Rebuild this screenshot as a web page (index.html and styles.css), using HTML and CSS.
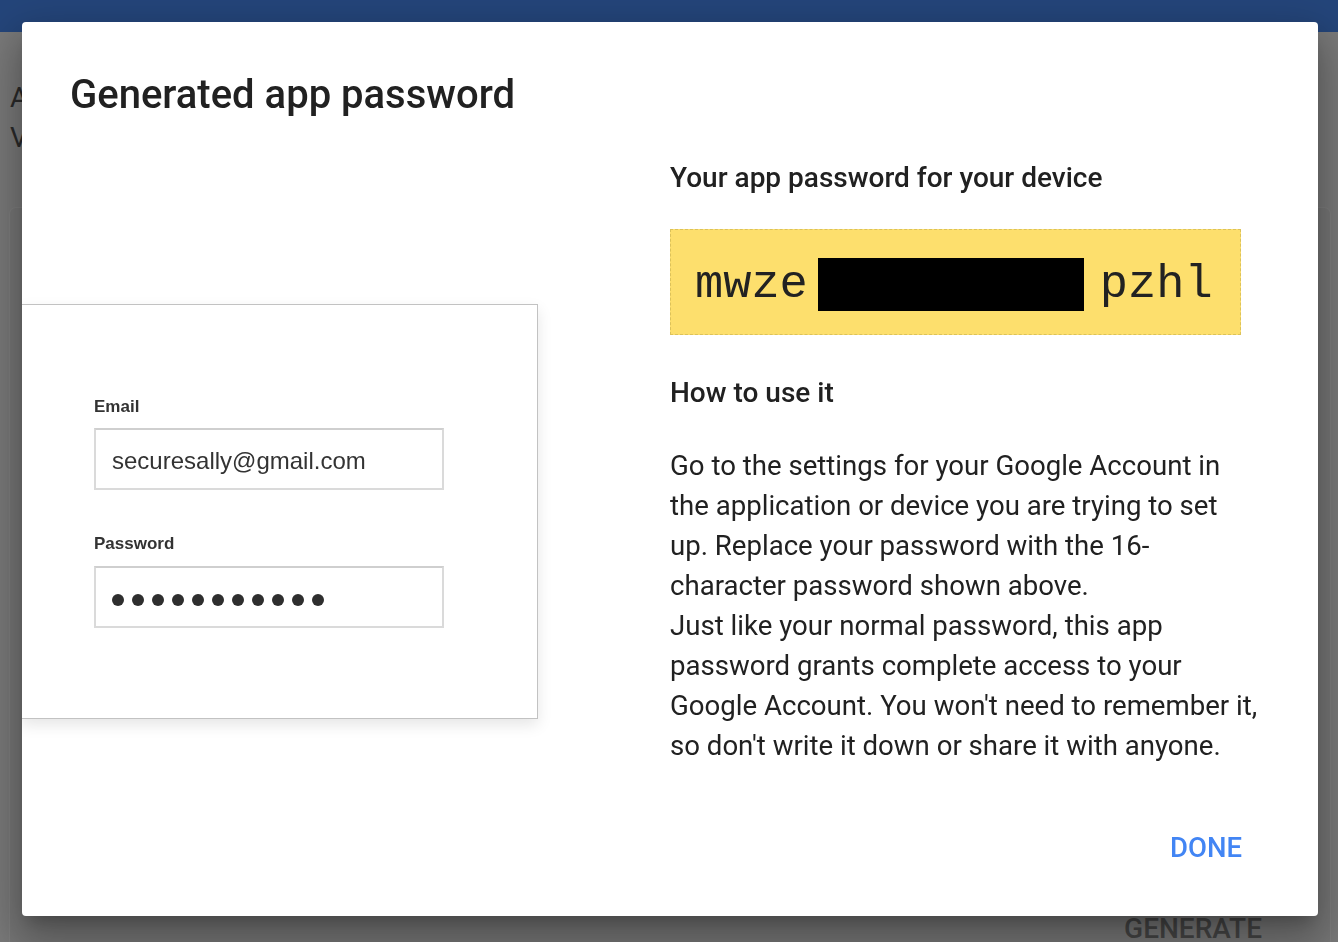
FILE: index.html
```html
<!DOCTYPE html>
<html lang="en">
<head>
<meta charset="utf-8">
<title>Generated app password</title>
<link rel="stylesheet" href="styles.css">
</head>
<body>
<div class="topbar"></div>
<main class="page">
  <p class="intro">App passwords let you sign in to your Google Account from apps on devices that don't support 2-Step<br>Verification. You'll only need to enter it once so you don't need to remember it.</p>
  <section class="card">
    <div class="card-actions"><span class="generate">GENERATE</span></div>
  </section>
</main>

<div class="dialog" role="dialog" aria-labelledby="dlg-title">
  <h1 class="dialog-title" id="dlg-title">Generated app password</h1>
  <div class="dialog-body">
    <div class="illustration">
      <div class="mock-form">
        <div class="mock-label">Email</div>
        <div class="mock-input">securesally@gmail.com</div>
        <div class="mock-label mock-label-second">Password</div>
        <div class="mock-input mock-dots">
          <span class="dot"></span><span class="dot"></span><span class="dot"></span><span class="dot"></span><span class="dot"></span><span class="dot"></span><span class="dot"></span><span class="dot"></span><span class="dot"></span><span class="dot"></span><span class="dot"></span>
        </div>
      </div>
    </div>
    <div class="info">
      <h2 class="info-heading">Your app password for your device</h2>
      <div class="password-box">
        <span class="pw-part">mwze</span>
        <span class="pw-redacted"></span>
        <span class="pw-part">pzhl</span>
      </div>
      <h2 class="info-heading how">How to use it</h2>
      <p class="info-text">Go to the settings for your Google Account in<br>the application or device you are trying to set<br>up. Replace your password with the 16-<br>character password shown above.<br>Just like your normal password, this app<br>password grants complete access to your<br>Google Account. You won't need to remember it,<br>so don't write it down or share it with anyone.</p>
    </div>
  </div>
  <div class="dialog-actions">
    <button class="done-btn" type="button">DONE</button>
  </div>
</div>
</body>
</html>
```
FILE: styles.css
```css
* { box-sizing: border-box; }

html, body {
  margin: 0;
  padding: 0;
  height: 100%;
}

body {
  background: #7a7a7a;
  font-family: Roboto, "Noto Sans", "Liberation Sans", sans-serif;
  overflow: hidden;
}

.topbar {
  height: 32px;
  background: #24457a;
}

.page {
  padding: 0 10px;
}

.intro {
  margin: 46px 0 0 0;
  font-size: 28px;
  line-height: 40px;
  color: #2a2a2a;
  white-space: nowrap;
}

.card {
  margin-top: 50px;
  width: 1320px;
  height: 760px;
  background: #777777;
  border-radius: 6px;
  box-shadow: 0 0 0 1px rgba(255,255,255,0.04);
  display: flex;
  flex-direction: column;
  justify-content: flex-end;
}

.card-actions {
  display: flex;
  justify-content: flex-end;
  padding: 0 68px 23px 0;
}

.generate {
  font-size: 28px;
  font-weight: 500;
  color: #454545;
  line-height: 32px;
}

/* Dialog */
.dialog {
  position: fixed;
  left: 22px;
  top: 22px;
  width: 1296px;
  height: 894px;
  background: #ffffff;
  border-radius: 4px;
  overflow: hidden;
  display: flex;
  flex-direction: column;
  padding-top: 49px;
  box-shadow: 0 24px 40px 6px rgba(0,0,0,0.22), 0 9px 46px 8px rgba(0,0,0,0.12), 0 11px 15px -7px rgba(0,0,0,0.2);
}

.dialog-title {
  margin: 0 0 0 48px;
  font-size: 40px;
  line-height: 48px;
  font-weight: 500;
  color: #212121;
}

.dialog-body {
  display: flex;
}

.illustration {
  flex: 0 0 648px;
  padding-top: 185px;
}

.mock-form {
  width: 517px;
  height: 415px;
  margin-left: -1px;
  background: #ffffff;
  border: 1px solid #c2c2c2;
  box-shadow: 0 6px 14px rgba(0,0,0,0.10);
  padding: 92px 0 0 72px;
  font-family: "Liberation Sans", Arial, sans-serif;
}

.mock-label {
  font-size: 17px;
  line-height: 20px;
  font-weight: 700;
  color: #333333;
  margin-bottom: 11px;
}

.mock-label-second {
  margin-top: 44px;
  margin-bottom: 12px;
}

.mock-input {
  width: 350px;
  height: 62px;
  border: 2px solid #dadada;
  border-top-color: #cfcfcf;
  padding: 3px 0 0 16px;
  font-size: 24px;
  line-height: 55px;
  color: #333333;
}

.mock-dots {
  display: flex;
  align-items: center;
  gap: 8px;
  padding-top: 6px;
  padding-left: 16px;
}

.dot {
  width: 12px;
  height: 12px;
  border-radius: 50%;
  background: #2e2e2e;
}

.info {
  flex: 0 0 610px;
}

.info-heading {
  margin: 43px 0 0 0;
  font-size: 28px;
  line-height: 32px;
  font-weight: 500;
  color: #212121;
}

.info-heading.how {
  margin-top: 42px;
}

.password-box {
  margin-top: 35px;
  width: 571px;
  height: 106px;
  background: #fddf6d;
  border: 1px dashed #dcc25a;
  display: flex;
  align-items: flex-start;
  padding: 28px 0 0 24px;
}

.pw-part {
  font-family: "Liberation Mono", "Courier New", monospace;
  font-size: 47px;
  color: #222222;
  line-height: 53px;
}

.pw-redacted {
  width: 266px;
  height: 53px;
  background: #000000;
  margin: 0 16px 0 10px;
}

.info-text {
  margin: 37px 0 0 0;
  font-size: 27.6px;
  line-height: 40px;
  color: #212121;
  white-space: nowrap;
}

.dialog-actions {
  margin-top: auto;
  display: flex;
  justify-content: flex-end;
  padding: 0 76px 52px 0;
}

.done-btn {
  background: none;
  border: none;
  padding: 0;
  font-family: Roboto, "Noto Sans", sans-serif;
  font-size: 27.5px;
  line-height: 32px;
  font-weight: 500;
  color: #4285f4;
  cursor: pointer;
}
```
